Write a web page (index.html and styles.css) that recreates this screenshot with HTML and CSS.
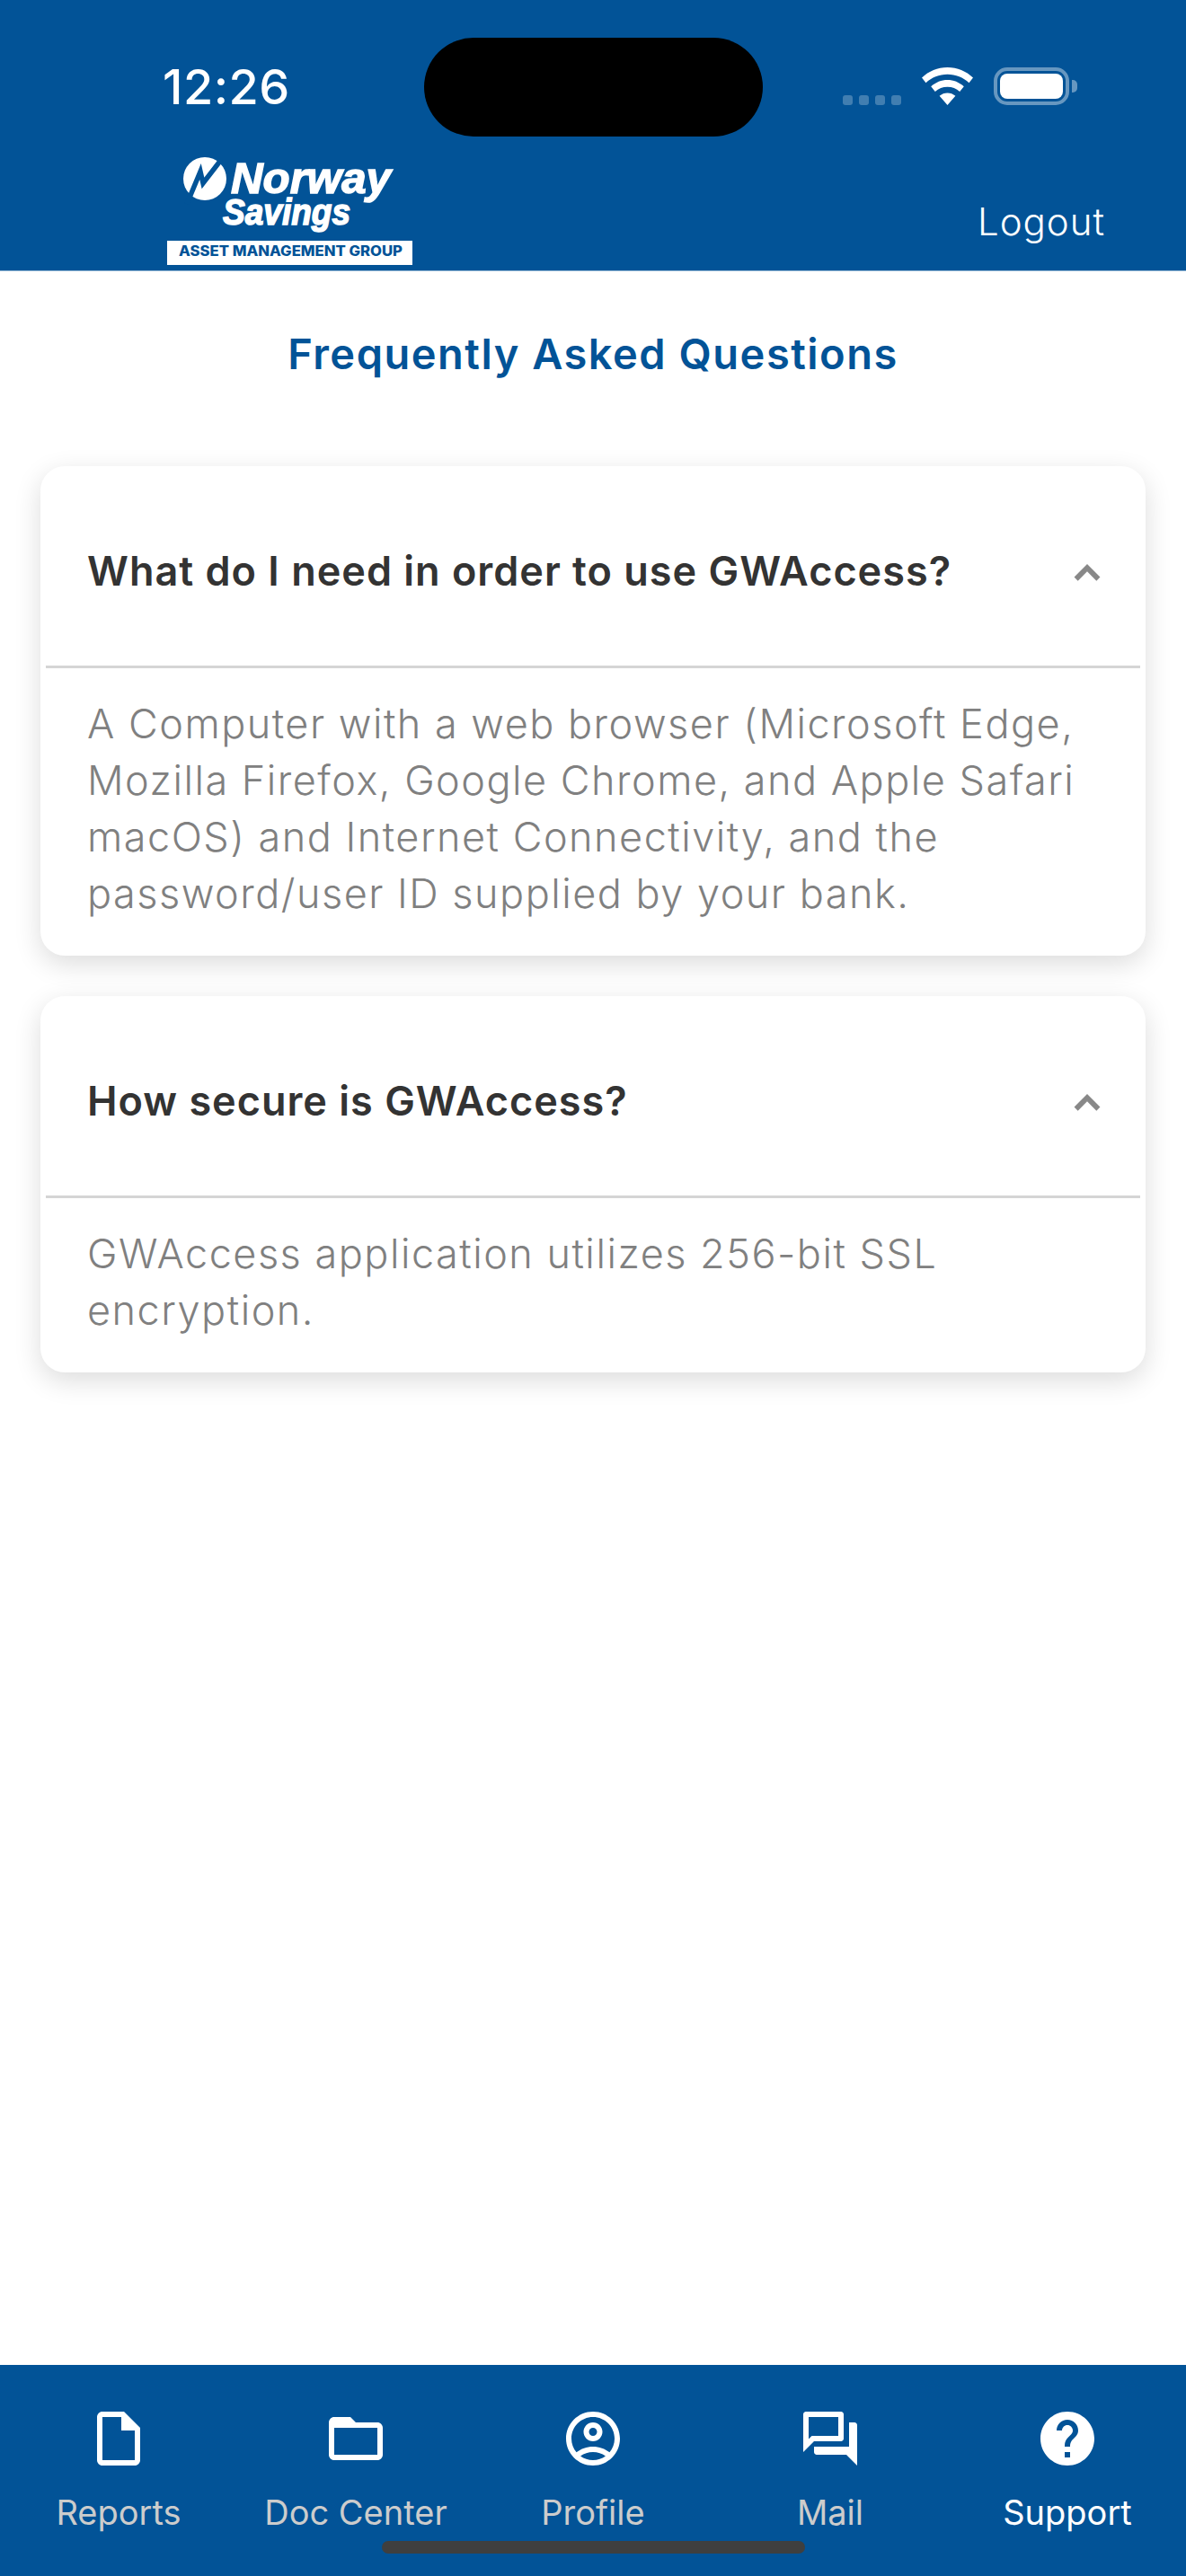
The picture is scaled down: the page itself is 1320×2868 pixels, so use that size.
FILE: index.html
```html
<!DOCTYPE html>
<html lang="en">
<head>
<meta charset="utf-8">
<title>Frequently Asked Questions</title>
<link rel="stylesheet" href="styles.css">
</head>
<body>
<div class="screen">
  <header class="header">
    <div class="status">
      <span class="time">12:26</span>
      <span class="island"></span>
      <div class="status-icons">
        <span class="signal"><i></i><i></i><i></i><i></i></span>
        <svg class="wifi" viewBox="0 0 57 42"><path d="M28.500 0C17.500 0 7.700 4.200 0 11.500L4.500 17.200C11 11.200 19.200 7.800 28.500 7.800S46 11.200 52.500 17.200L57 11.500C49.300 4.200 39.500 0 28.500 0ZM28.500 14C21.700 14 15.500 16.500 10.200 21.300L14.800 27C18.600 23.600 23.300 21.700 28.500 21.700S38.400 23.600 42.200 27L46.800 21.300C41.500 16.500 35.300 14 28.500 14ZM28.500 28.500C25.200 28.500 22.200 29.700 19.600 31.800L28.500 42L37.400 31.800C34.800 29.700 31.800 28.500 28.500 28.500Z"/></svg>
        <span class="battery"><span class="battery-fill"></span></span>
        <span class="battery-nub"></span>
      </div>
    </div>
    <div class="brand-row">
      <svg class="logo" viewBox="0 0 273 120">
        <circle class="logo-white" cx="42" cy="24" r="24"/>
        <path class="logo-cut" d="M22 52L37 16L40 29L60 3"/>
        <text class="logo-norway" x="71" y="40" textLength="178" lengthAdjust="spacingAndGlyphs">Norway</text>
        <text class="logo-savings" x="62" y="75" textLength="142" lengthAdjust="spacingAndGlyphs">Savings</text>
        <rect class="logo-white" x="0" y="93" width="273" height="27"/>
        <text class="logo-group" x="13" y="110" textLength="249" lengthAdjust="spacingAndGlyphs">ASSET MANAGEMENT GROUP</text>
      </svg>
      <span class="logout">Logout</span>
    </div>
  </header>

  <main class="main">
    <h1 class="title">Frequently Asked Questions</h1>
    <section class="card">
      <div class="card-head">
        <h2 class="question">What do I need in order to use GWAccess?</h2>
        <svg class="chevron" viewBox="0 0 24 24"><path d="M12 8l-6 6 1.410 1.410L12 10.830l4.590 4.580L18 14z"/></svg>
      </div>
      <div class="divider"></div>
      <p class="answer">A Computer with a web browser (Microsoft Edge,<br>Mozilla Firefox, Google Chrome, and Apple Safari<br>macOS) and Internet Connectivity, and the<br>password/user ID supplied by your bank.</p>
    </section>
    <section class="card">
      <div class="card-head">
        <h2 class="question">How secure is GWAccess?</h2>
        <svg class="chevron" viewBox="0 0 24 24"><path d="M12 8l-6 6 1.410 1.410L12 10.830l4.590 4.580L18 14z"/></svg>
      </div>
      <div class="divider"></div>
      <p class="answer">GWAccess application utilizes 256-bit SSL<br>encryption.</p>
    </section>
  </main>

  <nav class="tabs">
    <div class="tab">
      <svg class="tab-icon" viewBox="0 0 24 24"><path d="M14 2H6c-1.100 0-2 .9-2 2v16c0 1.100.9 2 2 2h12c1.100 0 2-.9 2-2V8l-6-6zM6 20V4h7v5h5v11H6z"/></svg>
      <span class="tab-label">Reports</span>
    </div>
    <div class="tab">
      <svg class="tab-icon" viewBox="0 0 24 24"><path d="M20 6h-8l-2-2H4c-1.100 0-1.990.9-1.990 2L2 18c0 1.100.9 2 2 2h16c1.100 0 2-.9 2-2V8c0-1.100-.9-2-2-2zm0 12H4V8h16v10z"/></svg>
      <span class="tab-label">Doc Center</span>
    </div>
    <div class="tab">
      <svg class="tab-icon" viewBox="0 0 24 24"><path d="M12 2C6.480 2 2 6.480 2 12s4.480 10 10 10 10-4.480 10-10S17.520 2 12 2zM7.350 18.500C8.660 17.560 10.260 17 12 17s3.340.56 4.650 1.500c-1.310.94-2.910 1.500-4.650 1.500s-3.340-.56-4.650-1.500zm10.790-1.380C16.450 15.800 14.320 15 12 15s-4.450.8-6.140 2.120C4.700 15.730 4 13.950 4 12c0-4.420 3.580-8 8-8s8 3.580 8 8c0 1.950-.7 3.730-1.860 5.120z"/><path d="M12 6c-1.930 0-3.500 1.570-3.500 3.500S10.070 13 12 13s3.500-1.570 3.500-3.500S13.930 6 12 6zm0 5c-.83 0-1.500-.67-1.500-1.500S11.170 8 12 8s1.500.67 1.500 1.500S12.830 11 12 11z"/></svg>
      <span class="tab-label">Profile</span>
    </div>
    <div class="tab">
      <svg class="tab-icon" viewBox="0 0 24 24"><path d="M15 4v7H5.170l-.59.59-.58.58V4h11m1-2H3c-.55 0-1 .45-1 1v14l4-4h10c.55 0 1-.45 1-1V3c0-.55-.45-1-1-1zm5 4h-2v9H6v2c0 .55.45 1 1 1h11l4 4V7c0-.55-.45-1-1-1z"/></svg>
      <span class="tab-label">Mail</span>
    </div>
    <div class="tab tab-active">
      <svg class="tab-icon" viewBox="0 0 24 24"><path d="M12 2C6.480 2 2 6.480 2 12s4.480 10 10 10 10-4.480 10-10S17.520 2 12 2zm1 17h-2v-2h2v2zm2.070-7.750l-.9.92C13.450 12.900 13 13.500 13 15h-2v-.5c0-1.100.45-2.100 1.170-2.830l1.240-1.260c.37-.36.59-.86.59-1.410 0-1.100-.9-2-2-2s-2 .9-2 2H8c0-2.210 1.790-4 4-4s4 1.790 4 4c0 .88-.36 1.680-.93 2.250z"/></svg>
      <span class="tab-label">Support</span>
    </div>
    <span class="home-indicator"></span>
  </nav>
</div>
</body>
</html>
```

FILE: styles.css
```css
* { box-sizing: border-box; }

html, body {
  margin: 0;
  padding: 0;
  background: #fff;
}

.screen {
  position: relative;
  display: flex;
  flex-direction: column;
  width: 1320px;
  height: 2868px;
  overflow: hidden;
  font-family: Inter, "Liberation Sans", sans-serif;
}

/* Header */
.header {
  flex: none;
  height: 302px;
  padding-top: 42px;
  background: #025397;
  border-bottom: 1px solid #8fb3d2;
  color: #fff;
}

.status {
  display: flex;
  align-items: center;
  height: 110px;
  padding-left: 181px;
}

.time {
  width: 291px;
  font-size: 54px;
  font-weight: 500;
  letter-spacing: .5px;
  line-height: 66px;
}

.island {
  width: 377px;
  height: 110px;
  border-radius: 55px;
  background: #000;
}

.status-icons {
  display: flex;
  align-items: flex-end;
  margin-left: 89px;
  height: 42px;
  margin-top: -2px;
}

.signal {
  display: flex;
  gap: 7px;
}

.signal i {
  width: 11px;
  height: 11px;
  border-radius: 3px;
  background: rgba(255, 255, 255, .25);
}

.wifi {
  width: 57px;
  height: 42px;
  margin-left: 23px;
  fill: #fff;
}

.battery {
  display: block;
  width: 84px;
  height: 42px;
  margin-left: 23px;
  padding: 3px;
  border: 4px solid rgba(255, 255, 255, .4);
  border-radius: 15px;
}

.battery-fill {
  display: block;
  width: 100%;
  height: 100%;
  background: #fff;
  border-radius: 8px;
}

.battery-nub {
  align-self: center;
  width: 6px;
  height: 14px;
  margin-left: 3px;
  border-radius: 0 5px 5px 0;
  background: rgba(255, 255, 255, .4);
}

.brand-row {
  display: flex;
  justify-content: space-between;
  padding: 23px 90px 0 186px;
}

.logo {
  display: block;
  width: 273px;
  height: 120px;
}

.logo-white { fill: #fff; }

.logo-cut {
  fill: none;
  stroke: #025397;
  stroke-width: 5.500;
}

.logo-norway,
.logo-savings {
  font-family: "Liberation Sans", sans-serif;
  font-style: italic;
  font-weight: 700;
  fill: #fff;
  stroke: #fff;
  stroke-width: 1.500;
}

.logo-norway { font-size: 49px; }
.logo-savings { font-size: 40px; }

.logo-group {
  font-size: 15.500px;
  font-weight: 800;
  fill: #025397;
}

.logout {
  margin-top: 42px;
  font-size: 42px;
  font-weight: 300;
  letter-spacing: 1px;
  line-height: 60px;
}

/* Content */
.main {
  flex: 1;
  padding: 0 45px;
}

.title {
  margin: 60px 0 93px;
  font-size: 47px;
  font-weight: 600;
  letter-spacing: 1.500px;
  line-height: 64px;
  text-align: center;
  color: #025397;
}

.card {
  margin-bottom: 45px;
  border-radius: 27px;
  background: #fff;
  box-shadow: 0 9px 30px rgba(0, 0, 0, .14);
}

.card-head {
  display: flex;
  justify-content: space-between;
  align-items: flex-start;
  height: 222px;
  padding: 87px 38px 0 52px;
}

.question {
  margin: 0;
  font-size: 45px;
  font-weight: 600;
  letter-spacing: 1px;
  line-height: 60px;
  color: #333;
}

.chevron {
  flex: none;
  width: 54px;
  height: 54px;
  margin-top: 5px;
  fill: #888;
  stroke: #888;
  stroke-width: .6;
}

.divider {
  height: 3px;
  margin: 0 6px;
  background: #d5d5d5;
}

.answer {
  margin: 0;
  padding: 30px 20px 38px 52px;
  font-size: 45px;
  font-weight: 300;
  letter-spacing: 1.500px;
  line-height: 63px;
  white-space: nowrap;
  color: #808080;
}

/* Tab bar */
.tabs {
  position: relative;
  flex: none;
  display: grid;
  grid-template-columns: repeat(5, 1fr);
  height: 235px;
  padding-top: 46px;
  background: #025397;
}

.tab {
  display: flex;
  flex-direction: column;
  align-items: center;
}

.tab-icon {
  display: block;
  width: 72px;
  height: 72px;
  fill: #fff;
}

.tab-label {
  margin-top: 23px;
  font-size: 38px;
  font-weight: 400;
  line-height: 46px;
  color: #ccc;
}

.tab-active .tab-label { color: #fff; }

.home-indicator {
  position: absolute;
  left: 425px;
  bottom: 25px;
  width: 471px;
  height: 14px;
  border-radius: 7px;
  background: #3f3f3f;
}
```
